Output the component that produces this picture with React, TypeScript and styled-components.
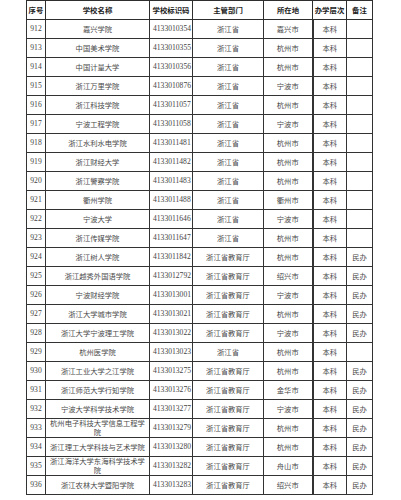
import styled, { createGlobalStyle } from 'styled-components'

const GlobalStyle = createGlobalStyle`
  html, body {
    margin: 0;
    padding: 0;
    background: #fff;
  }
`

const Page = styled.div`
  padding: 0 0 0 26px;
  background: #fff;
`

const Table = styled.table`
  border-collapse: collapse;
  table-layout: fixed;
  width: 347px;
  border: 1px solid #2e2e2e;
`

const Row = styled.tr`
  height: 19px;
`

const HeadCell = styled.th`
  border: 1px solid #2e2e2e;
  padding: 0;
  font-family: "Noto Sans CJK SC", "DejaVu Sans", sans-serif;
  font-size: 7.4px;
  font-weight: 700;
  color: #222;
  text-align: center;
  vertical-align: middle;
  line-height: 8px;
  white-space: nowrap;
`

const Cell = styled.td<{ $thick?: boolean }>`
  border: 1px solid #333;
  border-left-width: ${(p) => (p.$thick ? '2px' : '1px')};
  padding: 0 3px;
  font-family: "Liberation Serif", "Noto Sans CJK SC", serif;
  font-size: 7.6px;
  color: #444;
  text-align: center;
  vertical-align: middle;
  line-height: 8px;
  overflow: hidden;
`

const Name = styled.span`
  font-family: "Noto Sans CJK SC", sans-serif;
  font-size: 7.3px;
  font-weight: 400;
  color: #4a4a4a;
`

const widths = [19, 104, 43, 71, 49, 34, 26]
const headers = ['序号', '学校名称', '学校标识码', '主管部门', '所在地', '办学层次', '备注']

const rows: [number, string, string, string, string][] = [
  [912, '嘉兴学院', '4133010354', '浙江省', '嘉兴市'],
  [913, '中国美术学院', '4133010355', '浙江省', '杭州市'],
  [914, '中国计量大学', '4133010356', '浙江省', '杭州市'],
  [915, '浙江万里学院', '4133010876', '浙江省', '宁波市'],
  [916, '浙江科技学院', '4133011057', '浙江省', '杭州市'],
  [917, '宁波工程学院', '4133011058', '浙江省', '宁波市'],
  [918, '浙江水利水电学院', '4133011481', '浙江省', '杭州市'],
  [919, '浙江财经大学', '4133011482', '浙江省', '杭州市'],
  [920, '浙江警察学院', '4133011483', '浙江省', '杭州市'],
  [921, '衢州学院', '4133011488', '浙江省', '衢州市'],
  [922, '宁波大学', '4133011646', '浙江省', '宁波市'],
  [923, '浙江传媒学院', '4133011647', '浙江省', '杭州市'],
  [924, '浙江树人学院', '4133011842', '浙江省教育厅', '杭州市'],
  [925, '浙江越秀外国语学院', '4133012792', '浙江省教育厅', '绍兴市'],
  [926, '宁波财经学院', '4133013001', '浙江省教育厅', '宁波市'],
  [927, '浙江大学城市学院', '4133013021', '浙江省教育厅', '杭州市'],
  [928, '浙江大学宁波理工学院', '4133013022', '浙江省教育厅', '宁波市'],
  [929, '杭州医学院', '4133013023', '浙江省', '杭州市'],
  [930, '浙江工业大学之江学院', '4133013275', '浙江省教育厅', '杭州市'],
  [931, '浙江师范大学行知学院', '4133013276', '浙江省教育厅', '金华市'],
  [932, '宁波大学科学技术学院', '4133013277', '浙江省教育厅', '宁波市'],
  [933, '杭州电子科技大学信息工程学院', '4133013279', '浙江省教育厅', '杭州市'],
  [934, '浙江理工大学科技与艺术学院', '4133013280', '浙江省教育厅', '杭州市'],
  [935, '浙江海洋大学东海科学技术学院', '4133013282', '浙江省教育厅', '舟山市'],
  [936, '浙江农林大学暨阳学院', '4133013283', '浙江省教育厅', '绍兴市'],
]

const App = () => {
  return (
    <Page>
      <GlobalStyle />
      <Table>
        <colgroup>
          {widths.map((w, i) => (
            <col key={i} style={{ width: w }} />
          ))}
        </colgroup>
        <thead>
          <Row>
            {headers.map((h) => (
              <HeadCell key={h}>{h}</HeadCell>
            ))}
          </Row>
        </thead>
        <tbody>
          {rows.map(([no, name, code, dept, city]) => {
            const minban = dept === '浙江省教育厅'
            return (
              <Row key={no}>
                <Cell>{no}</Cell>
                <Cell><Name>{name}</Name></Cell>
                <Cell>{code}</Cell>
                <Cell><Name>{dept}</Name></Cell>
                <Cell><Name>{city}</Name></Cell>
                <Cell $thick><Name>本科</Name></Cell>
                <Cell><Name>{minban ? '民办' : ''}</Name></Cell>
              </Row>
            )
          })}
        </tbody>
      </Table>
    </Page>
  )
}

export default App
